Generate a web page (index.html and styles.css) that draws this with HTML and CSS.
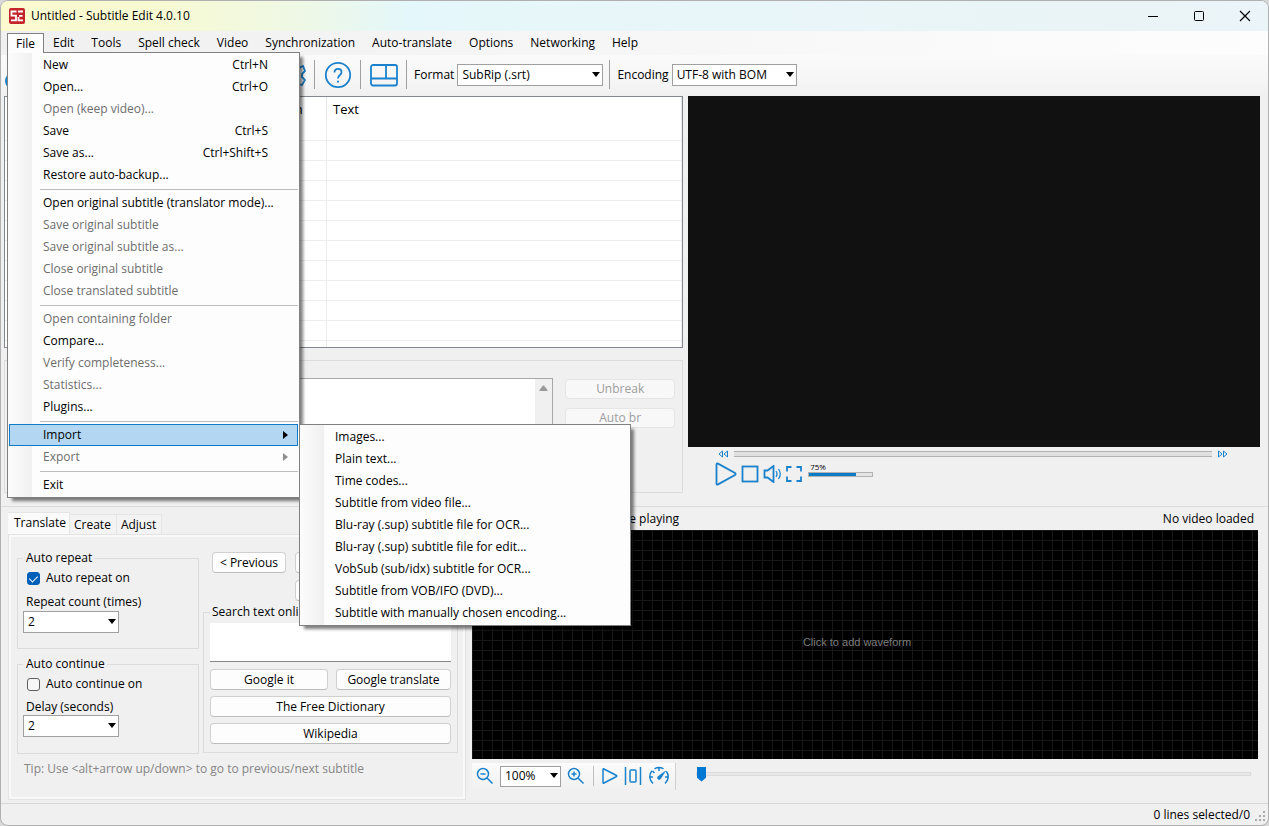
FILE: index.html
```html
<!DOCTYPE html>
<html lang="en">
<head>
  <meta charset="UTF-8" />
  <title>Untitled - Subtitle Edit 4.0.10</title>
  <link rel="stylesheet" href="styles.css">
</head>
<body>
  <div class="window">
    <!-- Title bar -->
    <header class="title-bar">
      <svg class="logo" width="16" height="16" viewBox="0 0 16 16" fill="none">
        <rect width="16" height="16" rx="2" fill="#c4232b" />
        <path d="M7.500 3.500H2.500V7.700H7V12.300H2M14 3.500H9M10 7.900H13.500M14 12.300H9.500V9" stroke="#fff" stroke-width="1.800" />
      </svg>
      <span class="title">Untitled - Subtitle Edit 4.0.10</span>
      <button class="win-btn" aria-label="Minimize"><svg width="12" height="12" viewBox="0 0 12 12"><path d="M1 6.500H11" stroke="#000" /></svg></button>
      <button class="win-btn" aria-label="Maximize"><svg width="12" height="12" viewBox="0 0 12 12"><rect x="1.500" y="1.500" width="9" height="9" rx="1" fill="none" stroke="#000" /></svg></button>
      <button class="win-btn" aria-label="Close"><svg width="12" height="12" viewBox="0 0 12 12"><path d="M1 1L11 11M11 1L1 11" stroke="#000" stroke-width="1.200" /></svg></button>
    </header>

    <!-- Menu bar -->
    <nav class="menu-bar">
      <div class="menu-root">
        <button class="menu-title open">File</button>
        <div class="menu file-menu">
          <button class="item"><span>New</span><span>Ctrl+N</span></button>
          <button class="item"><span>Open...</span><span>Ctrl+O</span></button>
          <button class="item" disabled>Open (keep video)...</button>
          <button class="item"><span>Save</span><span>Ctrl+S</span></button>
          <button class="item"><span>Save as...</span><span>Ctrl+Shift+S</span></button>
          <button class="item">Restore auto-backup...</button>
          <hr>
          <button class="item">Open original subtitle (translator mode)...</button>
          <button class="item" disabled>Save original subtitle</button>
          <button class="item" disabled>Save original subtitle as...</button>
          <button class="item" disabled>Close original subtitle</button>
          <button class="item" disabled>Close translated subtitle</button>
          <hr>
          <button class="item" disabled>Open containing folder</button>
          <button class="item">Compare...</button>
          <button class="item" disabled>Verify completeness...</button>
          <button class="item" disabled>Statistics...</button>
          <button class="item">Plugins...</button>
          <hr>
          <div class="submenu-root">
            <button class="item has-sub selected">Import</button>
            <div class="menu import-menu">
              <button class="item">Images...</button>
              <button class="item">Plain text...</button>
              <button class="item">Time codes...</button>
              <button class="item">Subtitle from video file...</button>
              <button class="item">Blu-ray (.sup) subtitle file for OCR...</button>
              <button class="item">Blu-ray (.sup) subtitle file for edit...</button>
              <button class="item">VobSub (sub/idx) subtitle for OCR...</button>
              <button class="item">Subtitle from VOB/IFO (DVD)...</button>
              <button class="item">Subtitle with manually chosen encoding...</button>
            </div>
          </div>
          <button class="item has-sub" disabled>Export</button>
          <hr>
          <button class="item">Exit</button>
        </div>
      </div>
      <button class="menu-title">Edit</button>
      <button class="menu-title">Tools</button>
      <button class="menu-title">Spell check</button>
      <button class="menu-title">Video</button>
      <button class="menu-title">Synchronization</button>
      <button class="menu-title">Auto-translate</button>
      <button class="menu-title">Options</button>
      <button class="menu-title">Networking</button>
      <button class="menu-title">Help</button>
    </nav>

    <!-- Toolbar -->
    <div class="toolbar">
      <div class="tools-left">
        <button class="icon-btn" aria-label="New"><svg width="28" height="28" viewBox="0 0 28 28"><circle cx="12" cy="20" r="8" fill="#1a82cc" /></svg></button>
        <button class="icon-btn" aria-label="Settings">
          <svg width="28" height="28" viewBox="0 0 28 28" class="stroke"><path d="M11 2h6l1 4 3 1 4-2 2 5-3 3v3l3 3-3 5-4-1-3 2-1 3h-5l-1-4-3-1-4 1-3-5 3-3v-3l-3-3 3-5 4 1 3-1z" /><circle cx="14" cy="14" r="4" /></svg>
        </button>
      </div>
      <span class="sep"></span>
      <button class="icon-btn" aria-label="Help">
        <svg width="28" height="28" viewBox="0 0 28 28" class="stroke"><circle cx="14" cy="14" r="12.200" /><path d="M10.500 11.500C10.500 9 12 7.900 14 7.900S17.500 9 17.500 11.200C17.500 14 14 14 14 17.500" /><path d="M14 19.700V21.500" stroke-width="2" /></svg>
      </button>
      <span class="sep"></span>
      <button class="icon-btn" aria-label="Layout">
        <svg width="28" height="28" viewBox="0 0 28 28" class="stroke"><rect x="1" y="4" width="26" height="20.500" rx="2" /><path d="M1 17.500H27M16 4V17.500" /></svg>
      </button>
      <span class="sep"></span>
      <label for="format">Format</label>
      <span class="combo combo-format"><select id="format"><option>SubRip (.srt)</option></select></span>
      <span class="sep"></span>
      <label for="encoding">Encoding</label>
      <span class="combo combo-encoding"><select id="encoding"><option>UTF-8 with BOM</option></select></span>
    </div>

    <!-- Subtitle list and video player -->
    <main class="top-area">
      <section class="left-pane">
        <div class="list-view">
          <table>
            <thead>
              <tr><th class="col-num">#</th><th class="col-time">Start time</th><th class="col-time">End time</th><th class="col-dur">Duration</th><th>Text</th></tr>
            </thead>
            <tbody>
              <tr><td></td><td></td><td></td><td></td><td></td></tr>
              <tr><td></td><td></td><td></td><td></td><td></td></tr>
              <tr><td></td><td></td><td></td><td></td><td></td></tr>
              <tr><td></td><td></td><td></td><td></td><td></td></tr>
              <tr><td></td><td></td><td></td><td></td><td></td></tr>
              <tr><td></td><td></td><td></td><td></td><td></td></tr>
              <tr><td></td><td></td><td></td><td></td><td></td></tr>
              <tr><td></td><td></td><td></td><td></td><td></td></tr>
              <tr><td></td><td></td><td></td><td></td><td></td></tr>
              <tr><td></td><td></td><td></td><td></td><td></td></tr>
              <tr><td></td><td></td><td></td><td></td><td></td></tr>
              <tr><td></td><td></td><td></td><td></td><td></td></tr>
            </tbody>
          </table>
        </div>
        <div class="edit-box">
          <div class="edit-text">
            <textarea aria-label="Subtitle text"></textarea>
            <div class="scroll-rail"><svg width="9" height="6" viewBox="0 0 9 6"><path d="M0.500 6V5L4 0.500H5L8.500 5V6z" fill="#9a9a9a" /></svg></div>
          </div>
          <div class="edit-buttons">
            <button class="btn" disabled>Unbreak</button>
            <button class="btn" disabled>Auto br</button>
          </div>
        </div>
      </section>

      <section class="player">
        <div class="video"></div>
        <div class="seek-row">
          <button class="icon-btn" aria-label="Back"><svg width="11" height="8" viewBox="0 0 11 8" class="thin"><path d="M4.500 1V7L1 4zM9.500 1V7L6 4z" /></svg></button>
          <input type="range" class="seek" aria-label="Video position" value="0">
          <button class="icon-btn" aria-label="Forward"><svg width="11" height="8" viewBox="0 0 11 8" class="thin"><path d="M1.500 1V7L5 4zM6.500 1V7L10 4z" /></svg></button>
        </div>
        <div class="play-row">
          <button class="icon-btn" aria-label="Play"><svg width="22" height="24" viewBox="0 0 22 24" class="stroke"><path d="M1.500 2.500Q1.500 0.800 3 1.600L20 11Q21.200 12 20 13L3 22.400Q1.500 23.200 1.500 21.500z" /></svg></button>
          <button class="icon-btn" aria-label="Stop"><svg width="18" height="18" viewBox="0 0 18 18" class="stroke"><rect x="1.500" y="1.500" width="15" height="15" /></svg></button>
          <button class="icon-btn" aria-label="Mute"><svg width="19" height="18" viewBox="0 0 19 18" class="stroke"><path d="M1.500 5.500H4.500L10.500 1V17L4.500 12.500H1.500z" /><path d="M13 6Q15 9 13 12M15.500 4Q19 9 15.500 14" stroke-width="1.300" /></svg></button>
          <button class="icon-btn" aria-label="Full screen"><svg width="16" height="16" viewBox="0 0 16 16" class="stroke"><path d="M1 5.500V1H5.500M10.500 1H15V5.500M15 10.500V15H10.500M5.500 15H1V10.500" /></svg></button>
          <div class="volume">
            <label for="volume">75%</label>
            <input type="range" id="volume" value="75">
          </div>
        </div>
      </section>
    </main>

    <!-- Translate tabs and waveform -->
    <div class="bottom-area">
      <section class="tabs-pane">
        <div class="tabs">
          <button class="tab active">Translate</button>
          <button class="tab">Create</button>
          <button class="tab">Adjust</button>
        </div>
        <div class="tab-page">
          <div class="tab-columns">
            <div class="options-col">
              <div class="group repeat" role="group" aria-labelledby="repeat-title">
                <span class="group-title" id="repeat-title">Auto repeat</span>
                <label class="check"><input type="checkbox" checked>Auto repeat on</label>
                <label for="repeat-count">Repeat count (times)</label>
                <span class="combo combo-small"><select id="repeat-count"><option>2</option></select></span>
              </div>
              <div class="group continue" role="group" aria-labelledby="continue-title">
                <span class="group-title" id="continue-title">Auto continue</span>
                <label class="check"><input type="checkbox">Auto continue on</label>
                <label for="delay">Delay (seconds)</label>
                <span class="combo combo-small"><select id="delay"><option>2</option></select></span>
              </div>
            </div>
            <div class="search-col">
              <div class="nav-buttons">
                <button class="btn">&lt; Previous</button>
                <button class="btn">Play</button>
                <button class="btn">Next &gt;</button>
                <button class="btn pause">Pause</button>
              </div>
              <div class="group search" role="group" aria-labelledby="search-title">
                <label class="group-title" id="search-title" for="search-text">Search text online</label>
                <textarea id="search-text"></textarea>
                <div class="search-buttons">
                  <button class="btn">Google it</button>
                  <button class="btn">Google translate</button>
                  <button class="btn wide">The Free Dictionary</button>
                  <button class="btn wide">Wikipedia</button>
                </div>
              </div>
            </div>
          </div>
          <p class="tip">Tip: Use &lt;alt+arrow up/down&gt; to go to previous/next subtitle</p>
        </div>
      </section>

      <section class="wave-pane">
        <div class="wave-head">
          <label class="check"><input type="checkbox">Select current subtitle while playing</label>
          <span>No video loaded</span>
        </div>
        <div class="waveform">Click to add waveform</div>
        <div class="wave-tools">
          <div class="wave-strip">
            <button class="icon-btn" aria-label="Zoom out"><svg width="18" height="18" viewBox="0 0 18 18" class="fine"><circle cx="7" cy="7" r="5.500" /><path d="M4.500 7H9.500M11 11L16.500 16.500" /></svg></button>
            <span class="combo combo-zoom"><select aria-label="Zoom"><option>100%</option></select></span>
            <button class="icon-btn" aria-label="Zoom in"><svg width="18" height="18" viewBox="0 0 18 18" class="fine"><circle cx="7" cy="7" r="5.500" /><path d="M4.500 7H9.500M7 4.500V9.500M11 11L16.500 16.500" /></svg></button>
            <span class="sep"></span>
            <button class="icon-btn" aria-label="Play"><svg width="16" height="18" viewBox="0 0 16 18" class="fine"><path d="M1 2.500Q1 1.500 2 2L14.500 8.500Q15.200 9 14.500 9.500L2 16Q1 16.500 1 15.500z" /></svg></button>
            <button class="icon-btn" aria-label="Center"><svg width="18" height="20" viewBox="0 0 18 20" class="fine"><path d="M1.500 1V19M16.500 1V19" /><rect x="6" y="4" width="6" height="12" rx="1" /></svg></button>
            <button class="icon-btn" aria-label="Speed"><svg width="22" height="20" viewBox="0 0 22 20" class="fine"><path d="M5 17.500A9 9 0 0 1 4 4.700M6.500 2.900A9 9 0 0 1 15.500 2.900M18.300 5.200A9 9 0 0 1 17 17.500M2 11H5M17 11H20M11 2V5M4.500 5L6.500 7" /><path d="M17.500 5L12.500 13Q10.500 14.500 9.500 12.500Q9 11 10.500 10z" fill="#1a82cc" stroke-width="0.500" /></svg></button>
          </div>
          <input type="range" class="wave-pos" aria-label="Waveform position" value="0">
        </div>
      </section>
    </div>

    <!-- Status bar -->
    <footer class="status-bar">
      <span>0 lines selected/0</span>
      <svg width="12" height="12" viewBox="0 0 12 12" fill="#ababab"><path d="M8 0h2v2h-2zM4 4h2v2h-2zM8 4h2v2h-2zM0 8h2v2h-2zM4 8h2v2h-2zM8 8h2v2h-2z" /></svg>
    </footer>
  </div>
</body>
</html>
```
FILE: styles.css
```css
* {
  box-sizing: border-box;
}
html, body {
  margin: 0;
  height: 100%;
}
body {
  background: #d8d8d8;
  font-family: "Open Sans", "Noto Sans", sans-serif;
  font-size: 12px;
  line-height: 16px;
  color: #000;
}
button, select, textarea, input {
  font: inherit;
  color: inherit;
  margin: 0;
}
button {
  padding: 0;
  border: none;
  background: none;
  white-space: nowrap;
}
svg {
  display: block;
}
label, span {
  white-space: nowrap;
}
.window {
  display: flex;
  flex-direction: column;
  height: 100%;
  min-height: 700px;
  background: #f0f0f0;
  border: 1px solid #b0b0b0;
  border-radius: 8px;
  overflow: hidden;
}

/* Title bar */
.title-bar {
  display: flex;
  align-items: center;
  height: 30px;
  flex: none;
  padding-left: 8px;
  background: linear-gradient(90deg, #fbfacf 0%, #f8fad2 12%, #eef8e6 24%, #e4f7fa 32%, #e8f6f9 50%, #eaf4f6 85%, #ebf4f8 100%);
}
.title {
  flex: 1;
  margin-left: 6px;
}
.win-btn {
  width: 46px;
  height: 30px;
  display: flex;
  align-items: center;
  justify-content: center;
}

/* Menu bar */
.menu-bar {
  display: flex;
  height: 24px;
  flex: none;
  padding: 2px 6px 0;
  background: linear-gradient(90deg, #f0f0f0, #fdfdfd);
}
.menu-root {
  position: relative;
  z-index: 5;
}
.menu-title {
  height: 20px;
  padding: 0 8px 0 9px;
}
.menu-title.open {
  position: relative;
  z-index: 2;
  padding: 0 8px;
  background: #fdfdfd;
  border: 1px solid #808080;
  border-bottom: none;
}
.menu {
  position: absolute;
  padding: 1px;
  background: linear-gradient(90deg, #fcfcfc, #f0f0f0 24px, #fdfdfd 24px);
  border: 1px solid #808080;
  box-shadow: 4px 4px 3px -1px rgba(0, 0, 0, 0.5);
}
.file-menu {
  top: 19px;
  left: 0;
  width: 293px;
}
.import-menu {
  top: 0;
  left: 290px;
  width: 332px;
}
.menu hr {
  height: 1px;
  margin: 3px 0 2px 31px;
  border: none;
  background: #bdbdbd;
}
.item {
  display: flex;
  align-items: center;
  justify-content: space-between;
  width: 100%;
  height: 22px;
  padding: 0 30px 0 34px;
  text-align: left;
}
.item:disabled {
  color: #6d6d6d;
}
.item.selected {
  background: #b3d7f3;
  border: 1px solid #0f7ac5;
  padding: 0 9px 0 33px;
}
.submenu-root {
  position: relative;
}
.has-sub {
  padding-right: 10px;
}
.has-sub::after {
  content: "";
  border: 4px solid transparent;
  border-left: 5px solid #000;
  border-right: none;
}
.has-sub:disabled::after {
  border-left-color: #8f8f8f;
}

/* Toolbar */
.toolbar {
  display: flex;
  align-items: center;
  height: 41px;
  flex: none;
  padding-bottom: 2px;
  background: linear-gradient(#fafafa, #f6f6f6 60%, #f0f0f0);
}
.tools-left {
  display: flex;
  justify-content: space-between;
  width: 305px;
}
.toolbar .sep {
  width: 1px;
  height: 29px;
  margin: 0 9px 0 8px;
  background: #a0a0a0;
}
.toolbar label {
  margin: 0 3px 0 -2px;
}
.stroke, .thin, .fine {
  fill: none;
  stroke: #1a82cc;
  stroke-width: 1.8;
}
.thin {
  stroke-width: 1;
}
.fine {
  stroke-width: 1.5;
}
.combo {
  position: relative;
  display: block;
}
.combo::after {
  content: "";
  position: absolute;
  right: 3px;
  top: 50%;
  margin-top: -3px;
  border: 4px solid transparent;
  border-top: 5px solid #000;
  border-bottom: none;
  pointer-events: none;
}
.combo select {
  appearance: none;
  display: block;
  width: 100%;
  height: 22px;
  padding: 0 4px;
  background: #fff;
  border: 1px solid #a0a0a0;
  border-radius: 0;
}
.combo-format {
  width: 146px;
  margin-right: -2px;
}
.combo-encoding {
  width: 125px;
}

/* List and player */
.top-area {
  display: flex;
  flex: 1;
  min-height: 0;
}
.left-pane {
  display: flex;
  flex-direction: column;
  flex: 0 0 54%;
  padding: 0 2px 13px 3px;
}
.list-view {
  flex: 1;
  min-height: 0;
  overflow: hidden;
  background: #fff;
  border: 1px solid #828790;
}
.list-view table {
  width: 100%;
  table-layout: fixed;
  border-collapse: separate;
  border-spacing: 0;
}
.list-view th {
  height: 24px;
  padding: 0 6px;
  font-size: 13px;
  font-weight: normal;
  text-align: left;
  border-right: 1px solid #e5e5e5;
}
.list-view td {
  height: 20px;
  padding: 0;
  border-right: 1px solid #ededed;
  border-bottom: 1px solid #ededed;
}
.col-num {
  width: 46px;
}
.col-time {
  width: 96px;
}
.col-dur {
  width: 84px;
}
.edit-box {
  display: flex;
  height: 133px;
  margin-top: 12px;
  padding: 17px 7px 14px 8px;
  border: 1px solid #dcdcdc;
}
.edit-text {
  display: flex;
  flex: 1;
  border: 1px solid #a8a8a8;
  background: #fff;
}
textarea {
  display: block;
  width: 100%;
  border: none;
  resize: none;
  background: #fff;
}
.scroll-rail {
  width: 17px;
  padding: 6px 4px;
  background: #f0f0f0;
}
.edit-buttons {
  display: flex;
  flex-direction: column;
  gap: 9px;
  width: 110px;
  margin-left: 12px;
  padding-top: 1px;
}
.btn {
  height: 21px;
  padding: 0 6px;
  background: #fdfdfd;
  border: 1px solid #d0d0d0;
  border-bottom-color: #bcbcbc;
  border-radius: 4px;
}
.edit-buttons .btn {
  height: 20px;
  color: #9d9d9d;
  background: #f8f8f8;
  border-color: #e5e5e5;
}
.player {
  display: flex;
  flex-direction: column;
  flex: 1;
  min-width: 0;
  padding: 0 8px 18px 3px;
}
.video {
  flex: 1;
  background: #111;
}
.seek-row {
  display: flex;
  align-items: center;
  gap: 5px;
  height: 13px;
  padding: 0 32px 0 30px;
}
input[type="range"] {
  appearance: none;
  display: block;
}
.seek {
  flex: 1;
  min-width: 0;
  height: 6px;
  background: #e0e0e0;
  border: solid #b2b2b2;
  border-width: 1px 0;
}
.seek::-webkit-slider-thumb {
  appearance: none;
  width: 0;
}
.play-row {
  display: flex;
  align-items: center;
  gap: 4px;
  height: 28px;
  padding-left: 27px;
}
.volume {
  display: flex;
  flex-direction: column;
  gap: 1px;
  width: 65px;
  margin: 0 0 8px 2px;
}
.volume label {
  padding-left: 2px;
  font-size: 8px;
  line-height: 8px;
}
.volume input {
  width: 100%;
  height: 5px;
  background: linear-gradient(90deg, #0f7ac5 75%, #e6e6e6 75%);
  border: 1px solid #b2b2b2;
}
.volume input::-webkit-slider-thumb {
  appearance: none;
  width: 0;
}

/* Bottom area */
.bottom-area {
  display: flex;
  flex: none;
  padding-bottom: 3px;
  border-top: 1px solid #dcdcdc;
}
.tabs-pane {
  display: flex;
  flex-direction: column;
  width: 458px;
  flex: none;
  margin: 5px 0 0 7px;
}
.tabs {
  display: flex;
  align-items: flex-end;
}
.tab {
  height: 20px;
  padding: 0 5px 0 4px;
  border: 1px solid #e5e5e5;
  border-left: none;
  border-bottom: none;
  background: #f3f3f3;
}
.tab.active {
  height: 22px;
  padding: 0 3px 2px 6px;
  background: #fafafa;
}
.tab-page {
  padding: 15px 5px 20px 6px;
  border: 3px solid #f9f9f9;
  outline: 1px solid #e3e3e3;
  outline-offset: -1px;
}
.tab-columns {
  display: flex;
  gap: 4px;
}
.options-col {
  display: flex;
  flex-direction: column;
  gap: 15px;
  width: 182px;
  padding-top: 6px;
}
.group {
  display: flex;
  flex-direction: column;
  align-items: flex-start;
  border: 1px solid #dcdcdc;
}
.group-title {
  margin-top: -9px;
  padding: 0 2px;
  background: #f0f0f0;
}
.repeat, .continue {
  height: 91px;
  padding: 0 5px;
}
.options-col label, .options-col .group-title {
  padding-left: 3px;
}
.continue {
  height: 90px;
}
.repeat .combo {
  margin-top: 1px;
}
.check {
  display: flex;
  align-items: center;
  gap: 6px;
  height: 24px;
}
.options-col .check {
  padding-left: 4px;
  margin-bottom: 4px;
}
.continue .check {
  margin-bottom: 3px;
}
.check input {
  appearance: none;
  width: 13px;
  height: 13px;
  border: 1px solid #5f5f5f;
  border-radius: 3px;
  background: #f6f6f6;
}
.check input:checked {
  display: flex;
  background: #005fb8;
  border-color: #005fb8;
}
.check input:checked::after {
  content: "";
  width: 4px;
  height: 7px;
  margin: 1px auto;
  border: solid #fff;
  border-width: 0 1px 1px 0;
  transform: rotate(45deg);
}
.combo-small {
  width: 96px;
}
.search-col {
  flex: 1;
  min-width: 0;
}
.nav-buttons {
  display: grid;
  grid-template-columns: 74px 74px 74px;
  gap: 7px 9px;
  padding-left: 9px;
}
.pause {
  grid-column: 2;
}
.search {
  align-items: stretch;
  height: 141px;
  margin-top: 11px;
  padding: 0 6px;
}
.search .group-title {
  align-self: flex-start;
}
.search textarea {
  height: 39px;
  margin-top: 3px;
  border-bottom: 1px solid #868686;
}
.search-buttons {
  display: grid;
  grid-template-columns: 118px 1fr;
  gap: 6px 8px;
  margin-top: 7px;
}
.wide {
  grid-column: 1 / 3;
}
.tip {
  margin: 7px 0 0 7px;
  color: #858585;
  white-space: nowrap;
}

/* Waveform */
.wave-pane {
  display: flex;
  flex-direction: column;
  flex: 1;
  min-width: 0;
  padding: 0 10px 0 6px;
}
.wave-head {
  display: flex;
  align-items: center;
  justify-content: space-between;
  height: 23px;
  margin-left: -6px;
  padding-right: 4px;
}
.wave-head .check {
  gap: 2px;
}
.waveform {
  display: flex;
  align-items: center;
  justify-content: center;
  flex: 1;
  max-height: 229px;
  padding: 0 16px 6px 0;
  color: #7d7d7d;
  font-family: "Liberation Sans", sans-serif;
  font-size: 11px;
  background-color: #000;
  background-image: linear-gradient(#181818 1px, transparent 1px), linear-gradient(90deg, #181818 1px, transparent 1px);
  background-size: 10px 10px;
}
.wave-tools {
  display: flex;
  align-items: flex-start;
  gap: 20px;
  padding: 4px 7px 0 0;
}
.wave-strip {
  display: flex;
  align-items: center;
  gap: 6px;
  height: 27px;
  padding: 0 5px 1px 4px;
  background: linear-gradient(#fbfbfb, #f0f0f0);
  border-right: 1px solid #d0d0d0;
}
.wave-strip .sep {
  width: 1px;
  height: 20px;
  margin: 0 2px;
  background: #c0c0c0;
}
.combo-zoom {
  width: 61px;
}
.combo-zoom select {
  height: 21px;
}
.wave-pos {
  flex: 1;
  min-width: 0;
  height: 15px;
  margin-top: 3px;
  background: none;
}
.wave-pos::-webkit-slider-runnable-track {
  height: 4px;
  border: 1px solid #dadada;
  background: #e9e9e9;
}
.wave-pos::-webkit-slider-thumb {
  appearance: none;
  width: 9px;
  height: 15px;
  margin-top: -6px;
  background: #0078d4;
  clip-path: polygon(0 0, 100% 0, 100% 75%, 50% 100%, 0 75%);
}

/* Status bar */
.status-bar {
  display: flex;
  align-items: center;
  justify-content: flex-end;
  gap: 5px;
  height: 22px;
  flex: none;
  padding-right: 1px;
  border-top: 1px solid #d7d7d7;
}
.status-bar svg {
  align-self: flex-end;
  margin-bottom: 2px;
}
```
